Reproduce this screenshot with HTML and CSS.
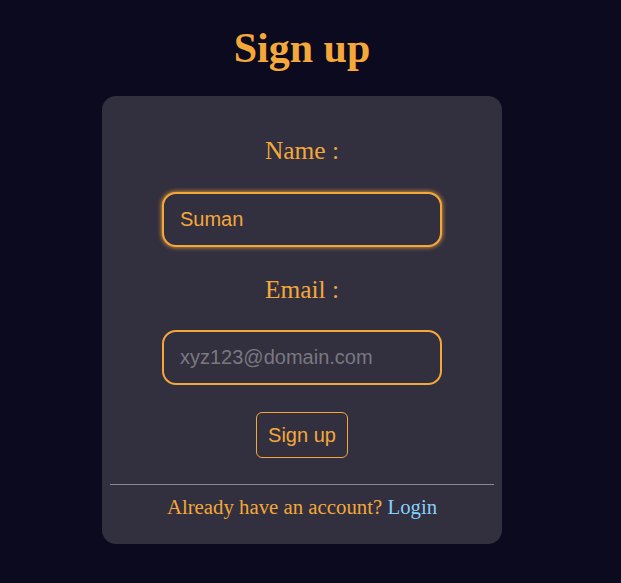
FILE: index.html
```html
<!DOCTYPE html>
<html lang="en">
<head>
<meta charset="utf-8">
<title>Sign up</title>
<link rel="stylesheet" href="styles.css">
</head>
<body>
<main class="page">
  <h1 class="title">Sign up</h1>
  <form class="card">
    <label class="label" for="name">Name :</label>
    <input class="field field-focus" id="name" type="text" value="Suman">
    <label class="label" for="email">Email :</label>
    <input class="field" id="email" type="email" placeholder="xyz123@domain.com">
    <button class="btn" type="button">Sign up</button>
    <hr class="rule">
    <p class="footer">Already have an account? <a class="link" href="#">Login</a></p>
  </form>
</main>
</body>
</html>
```
FILE: styles.css
```css
html, body {
  margin: 0;
  padding: 0;
  background: #0b0a1e;
}
.page {
  display: flex;
  flex-direction: column;
  align-items: center;
  padding-top: 24px;
  padding-right: 17px;
}
.title {
  margin: 0;
  font-family: "Liberation Serif", serif;
  font-weight: bold;
  font-size: 42px;
  line-height: 48px;
  color: #f5a83a;
}
.card {
  margin-top: 24px;
  width: 400px;
  box-sizing: border-box;
  padding: 39px 8px 24px;
  background: #322f3e;
  border-radius: 14px;
  display: flex;
  flex-direction: column;
  align-items: center;
}
.label {
  font-family: "Liberation Serif", serif;
  font-size: 25.4px;
  line-height: 30px;
  color: #f5a83a;
}
.field {
  margin: 27px 0;
  width: 280px;
  height: 55px;
  box-sizing: border-box;
  padding: 0 16px;
  background: #322f3e;
  border: 2px solid #f5a83a;
  border-radius: 14px;
  font-family: "Liberation Sans", Arial, sans-serif;
  font-size: 20px;
  color: #f5a83a;
  outline: none;
}
.field::placeholder {
  color: #7a7880;
}
.field-focus {
  box-shadow: 0 0 5px #f5a83a;
}
#email {
  margin-bottom: 27px;
  margin-top: 26px;
}
.btn {
  width: 92px;
  height: 46px;
  box-sizing: border-box;
  background: #322f3e;
  border: 1px solid #f5a83a;
  border-radius: 6px;
  font-family: "Liberation Sans", Arial, sans-serif;
  font-size: 20px;
  color: #f5a83a;
  padding: 0;
}
.rule {
  align-self: stretch;
  margin: 26px 0 0;
  border: 0;
  border-top: 1px solid #8a8890;
  height: 0;
}
.footer {
  margin: 9px 0 0;
  font-family: "Liberation Serif", serif;
  font-size: 20.8px;
  line-height: 26px;
  color: #f5a83a;
}
.link {
  color: #87cefa;
  text-decoration: none;
}
```
